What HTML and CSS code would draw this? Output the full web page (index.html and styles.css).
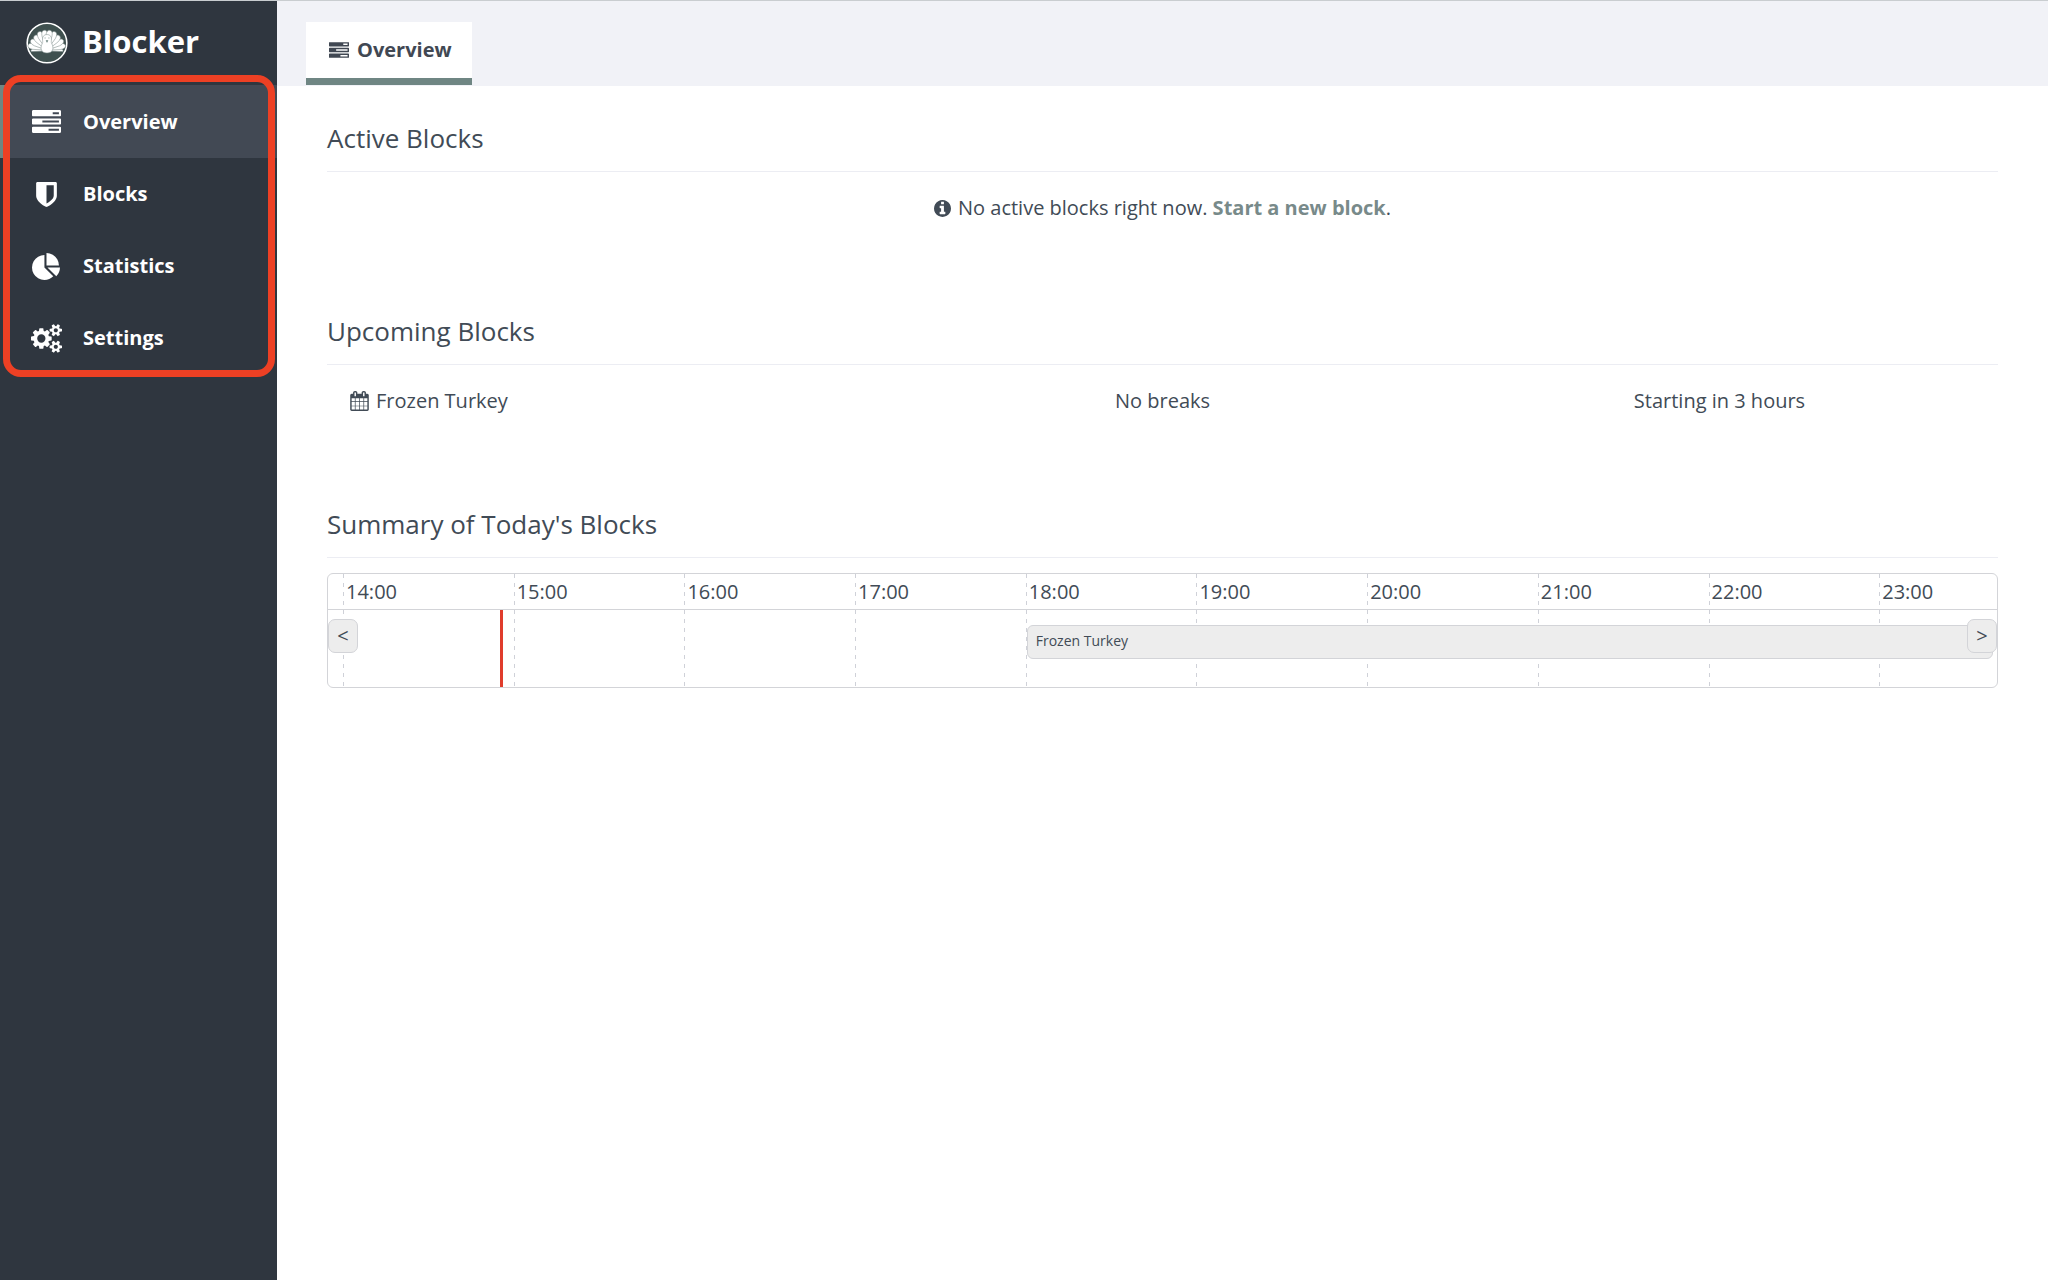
FILE: index.html
```html
<!DOCTYPE html>
<html lang="en">
<head>
<meta charset="utf-8">
<meta name="viewport" content="width=device-width, initial-scale=1">
<title>Blocker</title>
<link rel="stylesheet" href="styles.css">
</head>
<body>
<svg class="sprite" aria-hidden="true">
  <symbol id="tasks" viewBox="0 128 1792 1408"><path d="M1024 1408h640v-128h-640v128zm-384-512h1024v-128h-1024v128zm640-512h384v-128h-384v128zm512 832v256q0 26-19 45t-45 19h-1664q-26 0-45-19t-19-45v-256q0-26 19-45t45-19h1664q26 0 45 19t19 45zm0-512v256q0 26-19 45t-45 19h-1664q-26 0-45-19t-19-45v-256q0-26 19-45t45-19h1664q26 0 45 19t19 45zm0-512v256q0 26-19 45t-45 19h-1664q-26 0-45-19t-19-45v-256q0-26 19-45t45-19h1664q26 0 45 19t19 45z"/></symbol>
</svg>
<div class="app">
  <aside class="sidebar">
    <div class="brand">
      <svg class="logo" viewBox="0 0 42 42" aria-hidden="true">
        <circle class="logo-ring" cx="21" cy="21" r="19.8"/>
        <g class="logo-bird">
          <path d="M21 29L5 29.500q-1-2 3-3.500l13-1 13 1q4 1.500 3 3.500z"/>
          <path id="feather" d="M21 29l-2.800-15q-.4-5.500 2.800-5.500t2.800 5.500z" transform="rotate(-76 21 28)"/>
          <path d="M21 29l-2.800-14q-.4-6 2.800-6t2.800 6z" transform="rotate(76 21 28)"/>
          <path d="M21 29l-2.900-14q-.4-6 2.900-6t2.900 6z" transform="rotate(-59 21 28)"/>
          <path d="M21 29l-2.900-14q-.4-6 2.900-6t2.900 6z" transform="rotate(59 21 28)"/>
          <path d="M21 29l-3-14q-.4-6 3-6t3 6z" transform="rotate(-41 21 28)"/>
          <path d="M21 29l-3-14q-.4-6 3-6t3 6z" transform="rotate(41 21 28)"/>
          <path d="M21 29l-3-15q-.4-6 3-6t3 6z" transform="rotate(-24 21 28)"/>
          <path d="M21 29l-3-15q-.4-6 3-6t3 6z" transform="rotate(24 21 28)"/>
          <path d="M21 29l-3-15q-.4-6 3-6t3 6z" transform="rotate(-8 21 28)"/>
          <path d="M21 29l-3-15q-.4-6 3-6t3 6z" transform="rotate(8 21 28)"/>
          <path class="logo-body" d="M21 12.500c-3 0-4.500 2-4.500 4.500 0 2 .6 3-.2 4.500-2.500 4.500-1.300 9.500 4.700 9.500s7.200-5 4.700-9.500c-.8-1.500-.2-2.500-.2-4.500 0-2.500-1.500-4.500-4.500-4.500z"/>
        </g>
        <path class="logo-face" d="M18.500 16h1.200M22.300 16h1.200M20.200 18.500l.8 1.800.8-1.800z"/>
      </svg>
      <span class="brand-name">Blocker</span>
    </div>
    <nav class="nav">
      <a class="nav-item active" href="#overview">
        <span class="nav-icon"><svg class="icon-tasks" aria-hidden="true"><use href="#tasks"/></svg></span>Overview</a>
      <a class="nav-item" href="#blocks">
        <span class="nav-icon"><svg class="icon-nav" viewBox="0 0 1792 1792" aria-hidden="true"><path d="M1344 960v-640h-448v1137q119-63 213-137 235-184 235-360zm192-768v768q0 86-33.500 170.500t-83 150-118 127.500-126.500 103-121 77.500-89.500 49.500-42.500 20q-12 6-26 6t-26-6q-16-7-42.500-20t-89.500-49.500-121-77.500-126.500-103-118-127.500-83-150-33.500-170.500v-768q0-26 19-45t45-19h1152q26 0 45 19t19 45z"/></svg></span>Blocks</a>
      <a class="nav-item" href="#statistics">
        <span class="nav-icon"><svg class="icon-nav" viewBox="0 -64 1792 1792" aria-hidden="true"><path d="M768 890l546 546q-106 108-247.500 168t-298.500 60q-209 0-385.500-103t-279.500-279.500-103-385.500 103-385.500 279.500-279.500 385.500-103v762zm187 6h773q0 157-60 298.500t-168 247.500zm709-128h-768v-768q209 0 385.500 103t279.500 279.500 103 385.500z"/></svg></span>Statistics</a>
      <a class="nav-item" href="#settings">
        <span class="nav-icon"><svg class="icon-gears" viewBox="0 0 1920 1792" aria-hidden="true"><path d="M896 896q0-106-75-181t-181-75-181 75-75 181 75 181 181 75 181-75 75-181zm768 512q0-52-38-90t-90-38-90 38-38 90q0 53 37.500 90.500t90.500 37.500 90.500-37.500 37.500-90.500zm0-1024q0-52-38-90t-90-38-90 38-38 90q0 53 37.500 90.500t90.500 37.500 90.500-37.500 37.500-90.500zm-384 421v185q0 10-7 19.500t-16 10.500l-155 24q-11 35-32 76 34 48 90 115 7 11 7 20 0 12-7 19-23 30-82.500 89.500t-78.500 59.500q-11 0-21-7l-115-90q-37 19-77 31-11 108-23 155-7 24-30 24h-186q-11 0-20-7.500t-10-17.500l-23-153q-34-10-75-31l-118 89q-7 7-20 7-11 0-21-8-144-133-144-160 0-9 7-19 10-14 41-53t47-61q-23-44-35-82l-152-24q-10-1-17-9.500t-7-19.500v-185q0-10 7-19.500t16-10.500l155-24q11-35 32-76-34-48-90-115-7-11-7-20 0-12 7-20 22-30 82-89t79-59q11 0 21 7l115 90q34-18 77-32 11-108 23-154 7-24 30-24h186q11 0 20 7.500t10 17.500l23 153q34 10 75 31l118-89q8-7 20-7 11 0 21 8 144 133 144 160 0 8-7 19-12 16-42 54t-45 60q23 48 34 82l152 23q10 2 17 10.500t7 19.500zm640 533v140q0 16-149 31-12 27-30 52 51 113 51 138 0 4-4 7-122 71-124 71-8 0-46-47t-52-68q-20 2-30 2t-30-2q-14 21-52 68t-46 47q-2 0-124-71-4-3-4-7 0-25 51-138-18-25-30-52-149-15-149-31v-140q0-16 149-31 13-29 30-52-51-113-51-138 0-4 4-7 4-2 35-20t59-34 30-16q8 0 46 46.500t52 67.500q20-2 30-2t30 2q51-71 92-112l6-2q4 0 124 70 4 3 4 7 0 25-51 138 17 23 30 52 149 15 149 31zm0-1024v140q0 16-149 31-12 27-30 52 51 113 51 138 0 4-4 7-122 71-124 71-8 0-46-47t-52-68q-20 2-30 2t-30-2q-14 21-52 68t-46 47q-2 0-124-71-4-3-4-7 0-25 51-138-18-25-30-52-149-15-149-31v-140q0-16 149-31 13-29 30-52-51-113-51-138 0-4 4-7 4-2 35-20t59-34 30-16q8 0 46 46.500t52 67.500q20-2 30-2t30 2q51-71 92-112l6-2q4 0 124 70 4 3 4 7 0 25-51 138 17 23 30 52 149 15 149 31z"/></svg></span>Settings</a>
      <div class="highlight"></div>
    </nav>
  </aside>
  <div class="page">
    <header class="topbar">
      <a class="tab" href="#overview"><svg class="icon-tab" aria-hidden="true"><use href="#tasks"/></svg>Overview</a>
    </header>
    <main class="content">
      <section class="section">
        <h2>Active Blocks</h2>
        <p class="notice"><svg class="icon-info" viewBox="128 128 1536 1536" aria-hidden="true"><path d="M1152 1376v-160q0-14-9-23t-23-9h-96v-512q0-14-9-23t-23-9h-320q-14 0-23 9t-9 23v160q0 14 9 23t23 9h96v320h-96q-14 0-23 9t-9 23v160q0 14 9 23t23 9h448q14 0 23-9t9-23zm-128-896v-160q0-14-9-23t-23-9h-192q-14 0-23 9t-9 23v160q0 14 9 23t23 9h192q14 0 23-9t9-23zm640 416q0 209-103 385.500t-279.500 279.500-385.500 103-385.500-103-279.500-279.500-103-385.500 103-385.500 279.500-279.500 385.500-103 385.500 103 279.500 279.500 103 385.500z"/></svg><span>No active blocks right now. <a href="#new">Start a new block</a>.</span></p>
      </section>
      <section class="section">
        <h2>Upcoming Blocks</h2>
        <table class="upcoming">
          <tbody><tr>
            <td><div class="block-name"><svg class="icon-calendar" viewBox="64 0 1664 1792" aria-hidden="true"><path d="M192 1664h288v-288h-288v288zm352 0h320v-288h-320v288zm-352-352h288v-320h-288v320zm352 0h320v-320h-320v320zm-352-384h288v-288h-288v288zm736 736h320v-288h-320v288zm-384-736h320v-288h-320v288zm768 736h288v-288h-288v288zm-384-352h320v-320h-320v320zm-352-864v-288q0-13-9.500-22.500t-22.500-9.500h-64q-13 0-22.500 9.500t-9.500 22.500v288q0 13 9.500 22.500t22.500 9.500h64q13 0 22.500-9.500t9.500-22.500zm736 864h288v-320h-288v320zm-384-384h320v-288h-320v288zm384 0h288v-288h-288v288zm32-480v-288q0-13-9.500-22.500t-22.500-9.500h-64q-13 0-22.500 9.500t-9.500 22.500v288q0 13 9.500 22.500t22.500 9.500h64q13 0 22.500-9.500t9.500-22.500zm384-64v1280q0 52-38 90t-90 38h-1408q-52 0-90-38t-38-90v-1280q0-52 38-90t90-38h128v-96q0-66 47-113t113-47h64q66 0 113 47t47 113v96h384v-96q0-66 47-113t113-47h64q66 0 113 47t47 113v96h128q52 0 90 38t38 90z"/></svg>Frozen Turkey</div></td>
            <td>No breaks</td>
            <td>Starting in 3 hours</td>
          </tr></tbody>
        </table>
      </section>
      <section class="section">
        <h2>Summary of Today's Blocks</h2>
        <div class="timeline">
          <div class="hours">
            <span class="hour">14:00</span>
            <span class="hour">15:00</span>
            <span class="hour">16:00</span>
            <span class="hour">17:00</span>
            <span class="hour">18:00</span>
            <span class="hour">19:00</span>
            <span class="hour">20:00</span>
            <span class="hour">21:00</span>
            <span class="hour">22:00</span>
            <span class="hour">23:00</span>
          </div>
          <div class="track">
            <div class="slots">
              <span class="slot"><span class="now" style="left: 92%"></span></span>
              <span class="slot"></span>
              <span class="slot"></span>
              <span class="slot"></span>
              <span class="slot"></span>
              <span class="slot"></span>
              <span class="slot"></span>
              <span class="slot"></span>
              <span class="slot"></span>
              <span class="slot"></span>
            </div>
            <div class="event">Frozen Turkey</div>
            <button class="scroll earlier" type="button" aria-label="Earlier">&lt;</button>
            <button class="scroll later" type="button" aria-label="Later">&gt;</button>
          </div>
        </div>
      </section>
    </main>
  </div>
</div>
</body>
</html>
```
FILE: styles.css
```css
* {
  box-sizing: border-box;
}

body {
  margin: 0;
  background: #fff;
  color: #414b56;
  font: 20px/28px "Open Sans", "Noto Sans", sans-serif;
}

svg {
  flex: none;
  fill: currentColor;
}

.sprite {
  position: absolute;
  width: 0;
  height: 0;
}

.app {
  display: flex;
  min-height: 100vh;
  border-top: 1px solid #c9cdd0;
}

/* Sidebar */
.sidebar {
  flex: none;
  width: 277px;
  background: #2f363f;
  color: #fff;
  font-weight: 700;
}

.brand {
  display: flex;
  align-items: center;
  gap: 14px;
  height: 84px;
  padding-left: 26px;
  font-size: 31px;
  line-height: 40px;
}

.brand-name {
  padding-bottom: 4px;
}

.logo {
  width: 42px;
  height: 42px;
}

.logo-ring {
  fill: #3f504f;
  stroke: #fff;
  stroke-width: 1.6;
}

.logo-bird {
  fill: #fff;
  stroke: #7b8a88;
  stroke-width: 0.5;
}

.logo-face {
  fill: #6f8683;
  stroke: #6f8683;
  stroke-width: 0.7;
}

.nav {
  position: relative;
}

.nav-item {
  display: flex;
  align-items: center;
  gap: 14px;
  height: 72px;
  padding-left: 23px;
  color: inherit;
  text-decoration: none;
}

.nav-item.active {
  height: 73px;
  padding-left: 18px;
  border-left: 5px solid #6f8683;
  background: #424954;
}

.nav-icon {
  display: flex;
  justify-content: center;
  width: 46px;
}

.icon-tasks {
  width: 29px;
  height: 23px;
}

.icon-nav {
  width: 29px;
  height: 29px;
}

.icon-gears {
  width: 31px;
  height: 29px;
}

.highlight {
  position: absolute;
  inset: -10px 2px -3px 3px;
  border: 7px solid #ed4024;
  border-radius: 18px;
  pointer-events: none;
}

/* Page */
.page {
  flex: 1;
  min-width: 0;
}

.topbar {
  display: flex;
  align-items: flex-end;
  height: 85px;
  padding: 0 0 1px 29px;
  background: #f1f2f7;
}

.tab {
  display: flex;
  align-items: center;
  gap: 8px;
  height: 63px;
  padding: 0 20px 0 23px;
  border-bottom: 7px solid #6f8683;
  background: #fff;
  color: #414853;
  font-weight: 700;
  text-decoration: none;
}

.icon-tab {
  width: 20px;
  height: 16px;
}

.content {
  padding: 35px 50px;
}

.section {
  min-height: 193px;
}

h2 {
  margin: 0;
  padding-bottom: 15px;
  border-bottom: 1px solid #ecedf3;
  font-size: 26px;
  font-weight: 400;
  line-height: 35px;
}

.notice {
  display: flex;
  align-items: center;
  justify-content: center;
  gap: 7px;
  margin: 22px 0 0;
}

.notice a {
  color: #788a8a;
  font-weight: 700;
  text-decoration: none;
}

.icon-info {
  width: 17px;
  height: 17px;
}

.upcoming {
  width: 100%;
  margin-top: 22px;
  border-collapse: collapse;
  table-layout: fixed;
  text-align: center;
}

.upcoming td {
  padding: 0;
}

.block-name {
  display: flex;
  align-items: center;
  gap: 7px;
  padding-left: 23px;
}

.icon-calendar {
  width: 19px;
  height: 20px;
}

/* Timeline */
.timeline {
  margin-top: 15px;
  border: 1px solid #d3d4d8;
  border-radius: 6px;
}

.hours,
.track {
  position: relative;
  display: grid;
  grid-template-columns: repeat(9, minmax(0, 171fr)) minmax(0, 118fr);
  padding-left: 15px;
}

.hours {
  height: 36px;
  border-bottom: 1px solid #d3d4d8;
}

.track {
  grid-template-rows: 77px;
}

.slots {
  display: grid;
  grid-row: 1;
  grid-column: 1 / -1;
  grid-template-columns: subgrid;
}

/* Dashed line at the start of each hour */
.hour,
.slot {
  background: repeating-linear-gradient(#cfd1d8 0 4px, transparent 4px 9px) left / 1px 100% no-repeat;
}

.hour {
  padding-left: 3px;
  line-height: 35px;
}

.slot {
  position: relative;
}

.now {
  position: absolute;
  top: 0;
  bottom: 0;
  width: 3px;
  background: #e03c2c;
}

.event {
  z-index: 1;
  grid-row: 1;
  grid-column: 5 / -1;
  height: 34px;
  margin: 15px 4px 0 1px;
  padding-left: 8px;
  border: 1px solid #d3d4d8;
  border-radius: 6px;
  background: #ededed;
  font-size: 14px;
  line-height: 30px;
}

.scroll {
  position: absolute;
  z-index: 2;
  top: 9px;
  width: 30px;
  height: 34px;
  padding: 0;
  border: 1px solid #d3d4d8;
  border-radius: 7px;
  background: #ededed;
  color: inherit;
  font: inherit;
}

.earlier {
  left: 0;
}

.later {
  right: 0;
}
```
